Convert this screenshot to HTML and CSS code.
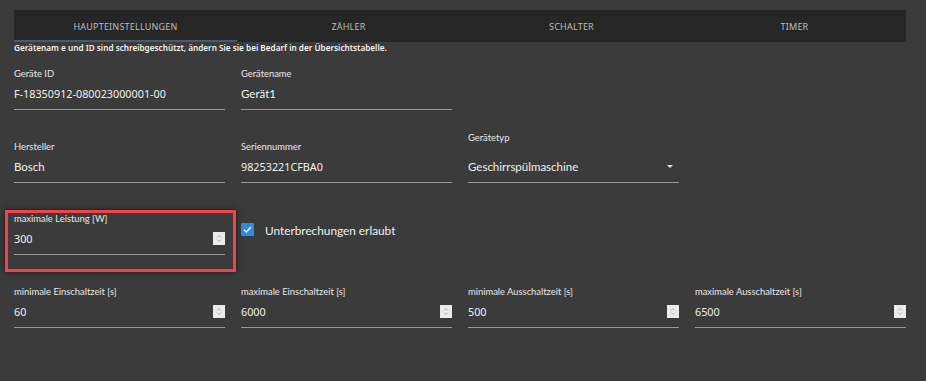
FILE: index.html
```html
<!DOCTYPE html>
<html lang="de">
<head>
<meta charset="utf-8">
<link rel="stylesheet" href="styles.css">
</head>
<body>
<div class="page">
  <nav class="tabs">
    <div class="tab active">Haupteinstellungen</div>
    <div class="tab">Zähler</div>
    <div class="tab">Schalter</div>
    <div class="tab">Timer</div>
  </nav>
  <p class="info">Gerätenam e und ID sind schreibgeschützt, ändern Sie sie bei Bedarf in der Übersichtstabelle.</p>
  <div class="grid">
    <div class="field">
      <label class="label">Geräte ID</label>
      <div class="input"><span class="value num">F-18350912-080023000001-00</span></div>
    </div>
    <div class="field">
      <label class="label">Gerätename</label>
      <div class="input"><span class="value">Gerät1</span></div>
    </div>
    <div class="empty"></div>
    <div class="empty"></div>

    <div class="field">
      <label class="label">Hersteller</label>
      <div class="input"><span class="value">Bosch</span></div>
    </div>
    <div class="field">
      <label class="label">Seriennummer</label>
      <div class="input"><span class="value num">98253221CFBA0</span></div>
    </div>
    <div class="field select">
      <label class="label">Gerätetyp</label>
      <div class="input"><span class="value">Geschirrspülmaschine</span><span class="caret"></span></div>
    </div>
    <div class="empty"></div>

    <div class="field highlighted">
      <span class="highlight"></span>
      <label class="label">maximale Leistung [W]</label>
      <div class="input"><span class="value num">300</span><span class="spin"><svg width="6" height="9" viewBox="0 0 6 9"><path d="M1 3.5 L3 1.5 L5 3.5 M1 5.5 L3 7.5 L5 5.5" fill="none" stroke="#9a9a9a" stroke-width="0.8"/></svg></span></div>
    </div>
    <div class="check">
      <span class="box"><svg width="13" height="13" viewBox="0 0 13 13"><path d="M3 6.8 L5.3 9 L10 4" fill="none" stroke="#fff" stroke-width="1.3"/></svg></span>
      <span class="check-label">Unterbrechungen erlaubt</span>
    </div>
    <div class="empty"></div>
    <div class="empty"></div>

    <div class="field">
      <label class="label">minimale Einschaltzeit [s]</label>
      <div class="input"><span class="value num">60</span><span class="spin"><svg width="6" height="9" viewBox="0 0 6 9"><path d="M1 3.5 L3 1.5 L5 3.5 M1 5.5 L3 7.5 L5 5.5" fill="none" stroke="#9a9a9a" stroke-width="0.8"/></svg></span></div>
    </div>
    <div class="field">
      <label class="label">maximale Einschaltzeit [s]</label>
      <div class="input"><span class="value num">6000</span><span class="spin"><svg width="6" height="9" viewBox="0 0 6 9"><path d="M1 3.5 L3 1.5 L5 3.5 M1 5.5 L3 7.5 L5 5.5" fill="none" stroke="#9a9a9a" stroke-width="0.8"/></svg></span></div>
    </div>
    <div class="field">
      <label class="label">minimale Ausschaltzeit [s]</label>
      <div class="input"><span class="value num">500</span><span class="spin"><svg width="6" height="9" viewBox="0 0 6 9"><path d="M1 3.5 L3 1.5 L5 3.5 M1 5.5 L3 7.5 L5 5.5" fill="none" stroke="#9a9a9a" stroke-width="0.8"/></svg></span></div>
    </div>
    <div class="field">
      <label class="label">maximale Ausschaltzeit [s]</label>
      <div class="input"><span class="value num">6500</span><span class="spin"><svg width="6" height="9" viewBox="0 0 6 9"><path d="M1 3.5 L3 1.5 L5 3.5 M1 5.5 L3 7.5 L5 5.5" fill="none" stroke="#9a9a9a" stroke-width="0.8"/></svg></span></div>
    </div>
  </div>
</div>
</body>
</html>
```

FILE: styles.css
```css
* { box-sizing: border-box; }
html, body {
  margin: 0;
  background: #3b3b3b;
  height: 100%;
}
body {
  font-family: Lato, "Noto Sans", sans-serif;
  color: #ececec;
}
.page {
  padding: 10px 20px 0 14px;
}
.tabs {
  display: grid;
  grid-template-columns: repeat(4, 1fr);
  background: #262626;
  height: 32px;
}
.tab {
  display: flex;
  align-items: center;
  justify-content: center;
  text-transform: uppercase;
  font-family: "Noto Sans", sans-serif;
  font-size: 9px;
  letter-spacing: 0.2px;
  color: #bdbdbd;
  border-bottom: 2px solid transparent;
  padding-top: 2px;
}
.tab.active {
  border-bottom-color: #4b5a68;
}
.info {
  margin: 0;
  font-family: "Noto Sans", sans-serif;
  font-size: 8.2px;
  font-weight: 600;
  line-height: 10px;
  padding-top: 1px;
  color: #f2f2f2;
}
.grid {
  display: grid;
  grid-template-columns: repeat(4, 1fr);
  column-gap: 16px;
  row-gap: 29.5px;
  padding-top: 14px;
}
.field {
  position: relative;
  display: flex;
  flex-direction: column;
}
.label {
  font-size: 9.4px;
  line-height: 14px;
  height: 14px;
  color: #e8e8e8;
}
.select .label {
  margin-top: -9px;
  margin-bottom: 9px;
}
.input {
  height: 29px;
  border-bottom: 1px solid #9a9a9a;
  display: flex;
  align-items: center;
  justify-content: space-between;
  padding-bottom: 3px;
}
.value {
  font-size: 11.5px;
  color: #f0f0f0;
}
.value.num {
  font-family: "Noto Sans", sans-serif;
  font-size: 10.8px;
}
.caret {
  width: 0;
  height: 0;
  border-left: 3px solid transparent;
  border-right: 3px solid transparent;
  border-top: 3.5px solid #e0e0e0;
  margin-right: 6px;
}
.spin {
  width: 12px;
  height: 13px;
  background: #ebebeb;
  display: flex;
  align-items: center;
  justify-content: center;
}
.highlight {
  position: absolute;
  top: -2px;
  left: -9px;
  right: -11px;
  bottom: -17px;
  border: 3px solid #f0434a;
  box-shadow: 0 0 6px rgba(0,0,0,0.6);
  pointer-events: none;
}
.check {
  display: flex;
  align-items: center;
  gap: 11px;
  padding-top: 9px;
  align-self: start;
}
.box {
  width: 13px;
  height: 13px;
  background: #2d8ae6;
  border-radius: 1px;
  display: flex;
}
.check-label {
  font-size: 11.8px;
  color: #f0f0f0;
  padding-top: 2px;
}
```
